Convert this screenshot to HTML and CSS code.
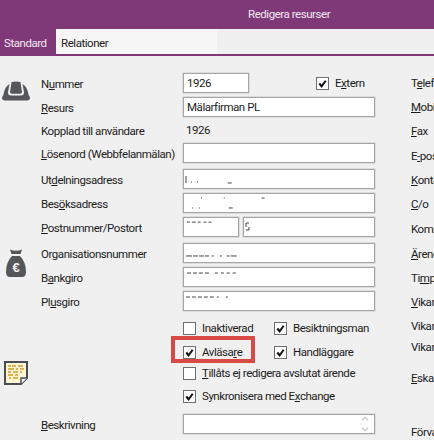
FILE: index.html
```html
<!DOCTYPE html>
<html lang="sv">
<head>
<meta charset="utf-8">
<title>Redigera resurser</title>
<link rel="stylesheet" href="styles.css">
</head>
<body>
<header class="titlebar">Redigera resurser</header>
<nav class="tabs">
  <span class="tab tab-active">Standard</span>
  <span class="tab">Relationer</span>
</nav>
<main class="content">
  <aside class="icons">
    <svg class="icon icon-hat" viewBox="0 0 28 20" width="28" height="20">
      <path class="dark" d="M9.500 1 Q14 0 18.500 1 L20 11 Q20 12.800 18 12.800 L10 12.800 Q8 12.800 8 11 Z"/>
      <path class="dark" d="M7.500 3 L6 11.500 Q6 14.500 9 14.500 L19 14.500 Q22 14.500 22 11.500 L20.500 3 Q25.500 6 26.500 13.500 L28 16.500 Q28 19.500 25 19.500 L3 19.500 Q0 19.500 0 16.500 L1.500 13.500 Q2.500 6 7.500 3 Z"/>
    </svg>
    <svg class="icon icon-bag" viewBox="0 0 20 28" width="20" height="28">
      <path class="dark" d="M4 0.500 Q7 2 10 1.500 Q13 2 16 0.500 L14.500 5 L5.500 5 Z"/>
      <path class="dark" d="M6 7 L14 7 Q20 13 20 23 Q20 28 16 28 L4 28 Q0 28 0 23 Q0 13 6 7 Z"/>
      <text class="euro" x="10" y="23" text-anchor="middle">€</text>
    </svg>
    <svg class="icon icon-note" viewBox="0 0 24 24" width="24" height="24">
      <path class="note-frame" d="M1 1 L23 1 L23 17 L17 23 L1 23 Z"/>
      <path class="note-fold" d="M23 17 L17 17 L17 23"/>
      <path class="note-lines" d="M4 5h3M8 5h4M14 5h5M4 8h6M12 8h2M16 8h4M4 11h3M9 11h5M16 11h2M4 14h5M11 14h3M5 17h2M9 17h5"/>
    </svg>
  </aside>

  <section class="form">
    <div class="row row-number">
      <label class="label"><span>N<u>u</u>mmer</span></label>
      <div class="field field-number">1926</div>
      <label class="check check-extern"><span class="box checked"><svg viewBox="0 0 12 12"><path d="M2.500 6 L5 9 L9.500 3"/></svg></span><span>E<u>x</u>tern</span></label>
    </div>
    <div class="row">
      <label class="label"><span><u>R</u>esurs</span></label>
      <div class="field">Mälarfirman PL</div>
    </div>
    <div class="row row-static">
      <label class="label"><span>Kopplad till användare</span></label>
      <div class="static">1926</div>
    </div>
    <div class="row">
      <label class="label"><span><u>L</u>ösenord (Webbfelanmälan)</span></label>
      <div class="field"></div>
    </div>
    <div class="row row-after">
      <label class="label"><span>Ut<u>d</u>elningsadress</span></label>
      <div class="field"><svg class="redact" viewBox="0 0 188 16"><path d="M2 5v7M7 11h1M13 11h1M44 12h4"/></svg></div>
    </div>
    <div class="row">
      <label class="label"><span>Bes<u>ö</u>ksadress</span></label>
      <div class="field"><svg class="redact" viewBox="0 0 188 16"><path d="M17 3h1M40 3h1M78 3h3M8 13h1M15 13h1M45 13h4"/></svg></div>
    </div>
    <div class="row">
      <label class="label"><span><u>P</u>ostnummer/Postort</span></label>
      <div class="field field-zip"><svg class="redact" viewBox="0 0 52 16"><path d="M3 3h3M8 3h4M14 3h3M20 3h3M25 3h3"/></svg></div>
      <div class="field field-city"><svg class="redact" viewBox="0 0 128 16"><path d="M2 4h3M2 4v4M5 8v3M2 11h3"/></svg></div>
    </div>
    <div class="row row-after">
      <label class="label"><span>Or<u>g</u>anisationsnummer</span></label>
      <div class="field"><svg class="redact" viewBox="0 0 188 16"><path d="M2 11h6M9 11h5M15 11h5M21 11h4M28 11h2M36 11h2M43 11h3M47 11h6"/></svg></div>
    </div>
    <div class="row">
      <label class="label"><span>B<u>a</u>nkgiro</span></label>
      <div class="field"><svg class="redact" viewBox="0 0 188 16"><path d="M3 4h4M9 4h4M15 4h4M21 4h4M31 4h3M37 4h3M43 4h3M49 4h3"/></svg></div>
    </div>
    <div class="row">
      <label class="label"><span>Pl<u>u</u>sgiro</span></label>
      <div class="field"><svg class="redact" viewBox="0 0 188 16"><path d="M2 4h4M8 4h4M14 4h4M20 4h4M26 4h4M33 4h2M42 4h2"/></svg></div>
    </div>

    <div class="checks">
      <label class="check"><span class="box"></span><span>Inaktiverad</span></label>
      <label class="check"><span class="box checked"><svg viewBox="0 0 12 12"><path d="M2.500 6 L5 9 L9.500 3"/></svg></span><span>Besiktningsman</span></label>
      <label class="check check-marked"><span class="box checked"><svg viewBox="0 0 12 12"><path d="M2.500 6 L5 9 L9.500 3"/></svg></span><span>Avläsa<u>r</u>e</span><i class="marker"></i></label>
      <label class="check"><span class="box checked"><svg viewBox="0 0 12 12"><path d="M2.500 6 L5 9 L9.500 3"/></svg></span><span>Handläggare</span></label>
      <label class="check check-wide"><span class="box"></span><span><u>T</u>illåts ej redigera avslutat ärende</span></label>
      <label class="check check-wide"><span class="box checked"><svg viewBox="0 0 12 12"><path d="M2.500 6 L5 9 L9.500 3"/></svg></span><span>Synkronisera med E<u>x</u>change</span></label>
    </div>

    <div class="row row-desc">
      <label class="label"><span><u>B</u>eskrivning</span></label>
      <div class="field field-desc">
        <svg class="scroll" viewBox="0 0 10 20"><path d="M1.500 6 L5 2.500 L8.500 6M1.500 14 L5 17.500 L8.500 14"/></svg>
      </div>
    </div>
  </section>

  <aside class="side">
    <span class="side-item s1">T<u>e</u>lefon</span>
    <span class="side-item s2"><u>M</u>obil</span>
    <span class="side-item s3"><u>F</u>ax</span>
    <span class="side-item s4">E<u>-</u>post</span>
    <span class="side-item s5"><u>K</u>ontakt</span>
    <span class="side-item s6"><u>C</u>/o</span>
    <span class="side-item s7">Kommun</span>
    <span class="side-item s8"><u>Ä</u>rende</span>
    <span class="side-item s9">Ti<u>m</u>pris</span>
    <span class="side-item s10"><u>V</u>ikarie</span>
    <span class="side-item s11">Vikarie</span>
    <span class="side-item s12">Vikarie</span>
    <span class="side-item s13"><u>E</u>skalering</span>
    <span class="side-item s14">Förvaltare</span>
  </aside>
</main>
</body>
</html>
```
FILE: styles.css
```css
* { box-sizing: border-box; }

html, body {
  margin: 0;
  width: 434px;
  height: 440px;
  overflow: hidden;
  background: #f0f0f0;
}

body {
  font-family: Roboto, "Liberation Sans", sans-serif;
  font-size: 11.5px;
  letter-spacing: -0.45px;
  color: #1c1c1c;
}

u { text-underline-offset: 1px; }

.titlebar {
  height: 29px;
  padding-left: 248px;
  line-height: 29px;
  background: #7f3978;
  color: #f2e8f0;
}

.tabs {
  display: flex;
  height: 27px;
  border-bottom: 2px solid #7f3978;
}

.tab {
  padding: 0 4px 0 5px;
  line-height: 29px;
  background: #f6f6f6;
  flex: 0 0 auto;
}

.tab-active {
  width: 56px;
  padding-left: 4px;
  background: #7f3978;
  color: #f2e8f0;
}

.tab-active + .tab {
  padding-left: 5px;
  width: 161px;
}

.content {
  display: flex;
  padding-top: 17px;
}

.icons {
  flex: 0 0 41px;
  display: flex;
  flex-direction: column;
  align-items: flex-start;
}

.icon { display: block; flex: none; }
.icon-hat { margin: 8px 0 0 2px; }
.icon-bag { margin: 148px 0 0 6px; }
.icon-note { margin: 84px 0 0 4px; }

.dark { fill: #54565a; }
.euro { fill: #f4f4f4; font: 700 13px "Liberation Sans", sans-serif; }
.note-frame { fill: #fdf5d3; stroke: #4a4e54; stroke-width: 2; }
.note-fold { fill: #fff; stroke: #4a4e54; stroke-width: 1.500; }
.note-lines { fill: none; stroke: #d99a2b; stroke-width: 1.300; }

.form {
  flex: 0 0 334px;
  display: flex;
  flex-direction: column;
  gap: 4px;
}

.row {
  display: flex;
  align-items: center;
  height: 20px;
}

.row-static { height: 18px; }
.row-after { margin-top: 2px; }

.label {
  flex: 0 0 142px;
  padding-top: 2px;
  white-space: nowrap;
}

.static { padding-left: 3px; }

.field {
  flex: 1 1 0;
  height: 20px;
  padding-left: 3px;
  background: #fff;
  border: 1px solid #a6a6a6;
  box-shadow: 0 0 0 0.500px #c8c8c8;
  line-height: 18px;
  position: relative;
  overflow: hidden;
}

.field-number { flex: 0 0 66px; }
.field-zip { flex: 0 0 56px; }
.field-city { flex: 1 1 0; margin-left: 4px; }

.redact {
  display: block;
  width: 100%;
  height: 16px;
  margin: 1px 0 0 -3px;
  fill: none;
  stroke: #444;
  stroke-width: 1;
}

.scroll {
  position: absolute;
  right: 4px;
  top: 0;
  width: 10px;
  height: 18px;
  fill: none;
  stroke: #c4c4c4;
  stroke-width: 1.300;
}

.check {
  display: flex;
  align-items: center;
  gap: 6px;
  white-space: nowrap;
  position: relative;
}

.check-extern { margin-left: 67px; }

.box {
  flex: none;
  width: 13px;
  height: 13px;
  background: #fff;
  border: 1px solid #6f6f6f;
  display: block;
}

.box svg {
  display: block;
  width: 11px;
  height: 11px;
  fill: none;
  stroke: #111;
  stroke-width: 2.200;
}

.checks {
  margin: 6px 0 0 142px;
  display: grid;
  grid-template-columns: 91px auto;
  grid-template-rows: 24px 21px 23px 21px;
  align-items: start;
}

.check-wide { grid-column: 1 / -1; }

.marker {
  position: absolute;
  left: -12px;
  top: -9px;
  width: 84px;
  height: 27px;
  border: 4px solid #d84b45;
  pointer-events: none;
}

.side {
  flex: 0 0 auto;
  margin-left: 36px;
  display: flex;
  flex-direction: column;
  white-space: nowrap;
  margin-top: 3px;
}

.side-item { display: block; height: 15px; }
.s2, .s3, .s6, .s10, .s11 { margin-top: 9px; }
.s4, .s7, .s8 { margin-top: 10px; }
.s5, .s9 { margin-top: 9px; }
.s12 { margin-top: 6px; }
.s13 { margin-top: 16px; }
.s14 { margin-top: 39px; }
```
